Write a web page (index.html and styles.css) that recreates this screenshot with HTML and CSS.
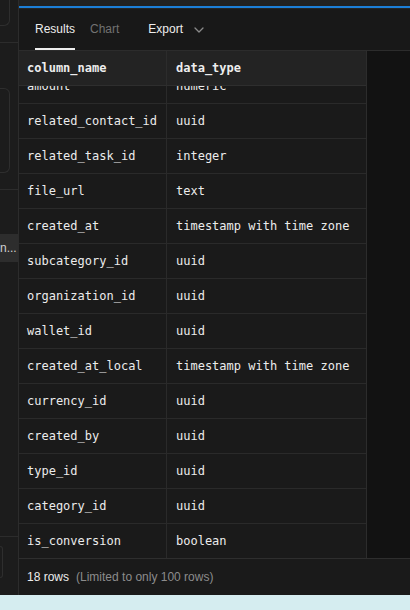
FILE: index.html
```html
<!DOCTYPE html>
<html>
<head>
<meta charset="utf-8">
<link rel="stylesheet" href="styles.css">
</head>
<body>
<div class="app">
  <aside class="sidebar">
    <div class="sb-box sb-box1"></div>
    <div class="sb-line sb-line1"></div>
    <div class="sb-box sb-box2"></div>
    <div class="sb-line sb-line2"></div>
    <div class="sb-item">n...</div>
    <div class="sb-spacer"></div>
    <div class="sb-line"></div>
    <div class="sb-box sb-box3"></div>
    <div class="sb-rest"></div>
  </aside>
  <main class="main">
    <div class="topstrip"></div>
    <div class="progress"></div>
    <nav class="tabs">
      <span class="tab tab-active">Results</span>
      <span class="tab tab-muted">Chart</span>
      <span class="tab tab-export">Export
        <svg class="chev" width="10" height="6" viewBox="0 0 10 6"><path d="M1 1l4 4 4-4" fill="none" stroke="#8a8a8a" stroke-width="1.3" stroke-linecap="round" stroke-linejoin="round"/></svg>
      </span>
    </nav>
    <section class="grid-area">
      <div class="table">
        <div class="thead">
          <div class="th">column_name</div>
          <div class="th">data_type</div>
        </div>
        <div class="tbody">
          <div class="rows">
            <div class="tr tr-first"><div class="td">amount</div><div class="td">numeric</div></div>
            <div class="tr"><div class="td">related_contact_id</div><div class="td">uuid</div></div>
            <div class="tr"><div class="td">related_task_id</div><div class="td">integer</div></div>
            <div class="tr"><div class="td">file_url</div><div class="td">text</div></div>
            <div class="tr"><div class="td">created_at</div><div class="td">timestamp with time zone</div></div>
            <div class="tr"><div class="td">subcategory_id</div><div class="td">uuid</div></div>
            <div class="tr"><div class="td">organization_id</div><div class="td">uuid</div></div>
            <div class="tr"><div class="td">wallet_id</div><div class="td">uuid</div></div>
            <div class="tr"><div class="td">created_at_local</div><div class="td">timestamp with time zone</div></div>
            <div class="tr"><div class="td">currency_id</div><div class="td">uuid</div></div>
            <div class="tr"><div class="td">created_by</div><div class="td">uuid</div></div>
            <div class="tr"><div class="td">type_id</div><div class="td">uuid</div></div>
            <div class="tr"><div class="td">category_id</div><div class="td">uuid</div></div>
            <div class="tr"><div class="td">is_conversion</div><div class="td">boolean</div></div>
          </div>
        </div>
      </div>
      <div class="blank"></div>
    </section>
    <footer class="footer">
      <span class="count">18 rows</span>
      <span class="limit">(Limited to only 100 rows)</span>
    </footer>
  </main>
</div>
<div class="band"></div>
</body>
</html>
```
FILE: styles.css
```css
* { box-sizing: border-box; }
html, body { margin: 0; padding: 0; }
body {
  width: 410px;
  height: 610px;
  overflow: hidden;
  background: #1c1c1c;
  font-family: "Liberation Sans", Arial, sans-serif;
  display: flex;
  flex-direction: column;
}
.app {
  height: 595px;
  display: flex;
}
.band {
  flex: 1;
  background: #d5edf0;
}

/* sidebar */
.sidebar {
  width: 19px;
  flex: none;
  background: #1c1c1c;
  border-right: 1px solid #2c2c2c;
  display: flex;
  flex-direction: column;
  overflow: hidden;
}
.sb-box {
  width: 10px;
  border: 1px solid #2e2e2e;
  border-left: none;
  border-radius: 0 6px 6px 0;
  flex: none;
}
.sb-box1 { height: 26px; border-top: none; border-radius: 0 0 6px 0; }
.sb-line {
  height: 1px;
  background: #2c2c2c;
  flex: none;
}
.sb-line1 { margin-top: 16px; }
.sb-box2 { height: 85px; margin-top: 45px; }
.sb-line2 { margin-top: 16px; }
.sb-item {
  margin-top: 44px;
  height: 28px;
  background: #2d2d2d;
  color: #d0d0d0;
  font-size: 12px;
  line-height: 28px;
  white-space: nowrap;
  flex: none;
}
.sb-spacer { height: 274px; flex: none; }
.sb-box3 { width: 3px; height: 32px; margin-top: 9px; }
.sb-rest { flex: 1; }

/* main */
.main {
  flex: 1;
  display: flex;
  flex-direction: column;
  background: #181818;
  min-width: 0;
}
.topstrip { height: 6px; background: #212121; flex: none; }
.progress { height: 2px; background: #1c7ed6; flex: none; }
.tabs {
  height: 42px;
  flex: none;
  display: flex;
  align-items: stretch;
  padding-left: 16px;
  border-top: 1px solid #242424;
  background: #181818;
}
.tab {
  font-size: 12px;
  display: flex;
  align-items: center;
  padding-top: 1px;
  border-bottom: 2px solid transparent;
}
.tab-active {
  color: #ededed;
  border-bottom-color: #ededed;
}
.tab-muted {
  color: #727272;
  margin-left: 15px;
}
.tab-export {
  color: #ededed;
  margin-left: 29px;
  gap: 11px;
}
.chev { margin-top: 1px; }

.grid-area {
  flex: 1;
  display: flex;
  border-top: 1px solid #2c2c2c;
  min-height: 0;
}
.table {
  width: 348px;
  flex: none;
  display: flex;
  flex-direction: column;
  border-right: 1px solid #2c2c2c;
  background: #1a1a1a;
}
.thead, .tr {
  display: grid;
  grid-template-columns: 148px 199px;
}
.thead {
  height: 35px;
  background: #232323;
  border-bottom: 1px solid #2e2e2e;
  flex: none;
}
.th {
  font-family: "DejaVu Sans Mono", "Liberation Mono", monospace;
  font-weight: bold;
  font-size: 12px;
  color: #ededed;
  padding-left: 8px;
  display: flex;
  align-items: center;
  border-right: 1px solid #2c2c2c;
}
.th:last-child { border-right: none; padding-left: 9px; }
.tbody {
  flex: 1;
  overflow: hidden;
}
.tr {
  height: 35px;
  border-bottom: 1px solid #2a2a2a;
}
.tr-first { margin-top: -17px; }
.td {
  font-family: "DejaVu Sans Mono", "Liberation Mono", monospace;
  font-size: 12px;
  color: #ececec;
  padding-left: 8px;
  display: flex;
  align-items: center;
  border-right: 1px solid #2a2a2a;
  white-space: nowrap;
}
.td:last-child { border-right: none; padding-left: 9px; }
.blank {
  flex: 1;
  background: #121212;
}
.footer {
  height: 37px;
  flex: none;
  border-top: 1px solid #2e2e2e;
  background: #1a1a1a;
  display: flex;
  align-items: center;
  padding-left: 8px;
  font-size: 12px;
  gap: 7px;
}
.count { color: #ededed; }
.limit { color: #8c8c8c; }
```
